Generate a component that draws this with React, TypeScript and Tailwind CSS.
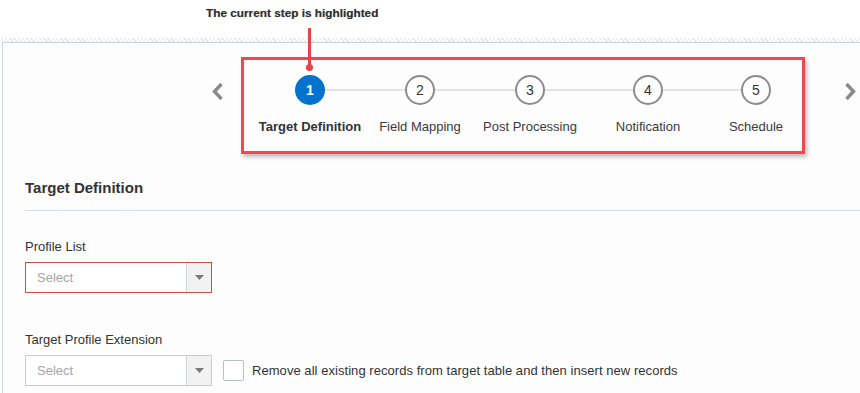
import React from "react";

const steps = [
  { n: 1, label: "Target Definition", w: "w-[110px]", active: true },
  { n: 2, label: "Field Mapping", w: "w-[110px]", active: false },
  { n: 3, label: "Post Processing", w: "w-[110px]", active: false },
  { n: 4, label: "Notification", w: "w-[126px]", active: false },
  { n: 5, label: "Schedule", w: "w-[90px]", active: false },
];

function Chevron({ dir }: { dir: "left" | "right" }) {
  return (
    <svg width="13" height="19" viewBox="0 0 13 19" className="block">
      <path
        d={dir === "left" ? "M10.5 2 L3.5 9.5 L10.5 17" : "M2.5 2 L9.5 9.5 L2.5 17"}
        fill="none"
        stroke="#8a8a8a"
        strokeWidth="3.4"
      />
    </svg>
  );
}

function SelectBox({ error }: { error?: boolean }) {
  return (
    <div
      className={`flex h-[31px] w-[187px] border ${
        error ? "border-[#c8513f]" : "border-[#c3cdd6]"
      } bg-white`}
    >
      <div className="flex flex-1 items-center pl-[11px] text-[13px] text-[#a5a5a5]">Select</div>
      <div className="flex w-[25px] items-center justify-center border-l border-[#cdd3d9] bg-[#f2f2f2]">
        <svg width="9" height="5" viewBox="0 0 9 5">
          <path d="M0 0 L9 0 L4.5 5 Z" fill="#7a7a7a" />
        </svg>
      </div>
    </div>
  );
}

export default function App() {
  return (
    <div
      className="relative h-[393px] w-[860px] overflow-hidden bg-white text-[#333]"
      style={{ fontFamily: '"Liberation Sans", Arial, sans-serif' }}
    >
      <div className="flex h-[38px] items-start pl-[206px] pt-[6px]">
        <span className="text-[11.8px] font-bold leading-[15px] text-[#2e2e2e] [text-shadow:0_0_1px_rgba(0,0,0,0.35)]">
          The current step is highlighted
        </span>
      </div>
      <div className="h-[4px] bg-[repeating-linear-gradient(45deg,#e4e4e4_0px,#e4e4e4_1px,#ffffff_1px,#ffffff_3px)]" />
      <div className="ml-[2px] h-[351px] border-l border-t border-[#c8d3dc] bg-[#fdfdfd]">
        <div className="flex items-start pt-[14px]">
          <div className="ml-[208px] mt-[25px]">
            <Chevron dir="left" />
          </div>
          <div className="relative ml-[17px] h-[97px] w-[564px] border-[3px] border-[#ee4850] shadow-[2px_3px_4px_rgba(0,0,0,0.25)]">
            <div className="relative flex pl-[11px] pt-[15px]">
              <div className="absolute left-[66px] right-[48px] top-[29px] h-[2px] bg-[#e2e2e2]" />
              {steps.map((s) => (
                <div key={s.n} className={`relative flex ${s.w} flex-col items-center`}>
                  <div
                    className={`flex h-[30px] w-[30px] items-center justify-center rounded-full text-[14px] ${
                      s.active
                        ? "bg-[#0572ce] font-bold text-white"
                        : "border-2 border-[#8c8c8c] bg-white text-[#333]"
                    }`}
                  >
                    {s.n}
                  </div>
                  <div
                    className={`mt-[14px] whitespace-nowrap text-[13px] leading-[15px] ${
                      s.active ? "font-bold text-[#333]" : "text-[#3a3a3a]"
                    }`}
                  >
                    {s.label}
                  </div>
                </div>
              ))}
            </div>
          </div>
          <div className="ml-[39px] mt-[25px]">
            <Chevron dir="right" />
          </div>
        </div>

        <div className="pl-[22px]">
          <div className="mt-[25px] text-[15px] font-bold leading-[18px] text-[#333]">Target Definition</div>
          <div className="mt-[13px] h-px bg-[#d6dee5]" />
          <div className="mt-[28px] text-[13px] leading-[16px]">Profile List</div>
          <div className="mt-[7px]">
            <SelectBox error />
          </div>
          <div className="mt-[39px] text-[13px] leading-[16px]">Target Profile Extension</div>
          <div className="mt-[7px] flex items-center">
            <SelectBox />
            <div className="ml-[11px] h-[21px] w-[21px] rounded-[2px] border border-[#b9c1c8] bg-white" />
            <span className="ml-[8px] text-[13px] tracking-[0.05px] text-[#333]">
              Remove all existing records from target table and then insert new records
            </span>
          </div>
        </div>
      </div>

      <div className="absolute left-[308px] top-[28px] h-[39px] w-[3px] bg-[#e8434b]" />
      <div className="absolute left-[306px] top-[64px] h-[7px] w-[7px] rounded-full bg-[#e8434b]" />
    </div>
  );
}
